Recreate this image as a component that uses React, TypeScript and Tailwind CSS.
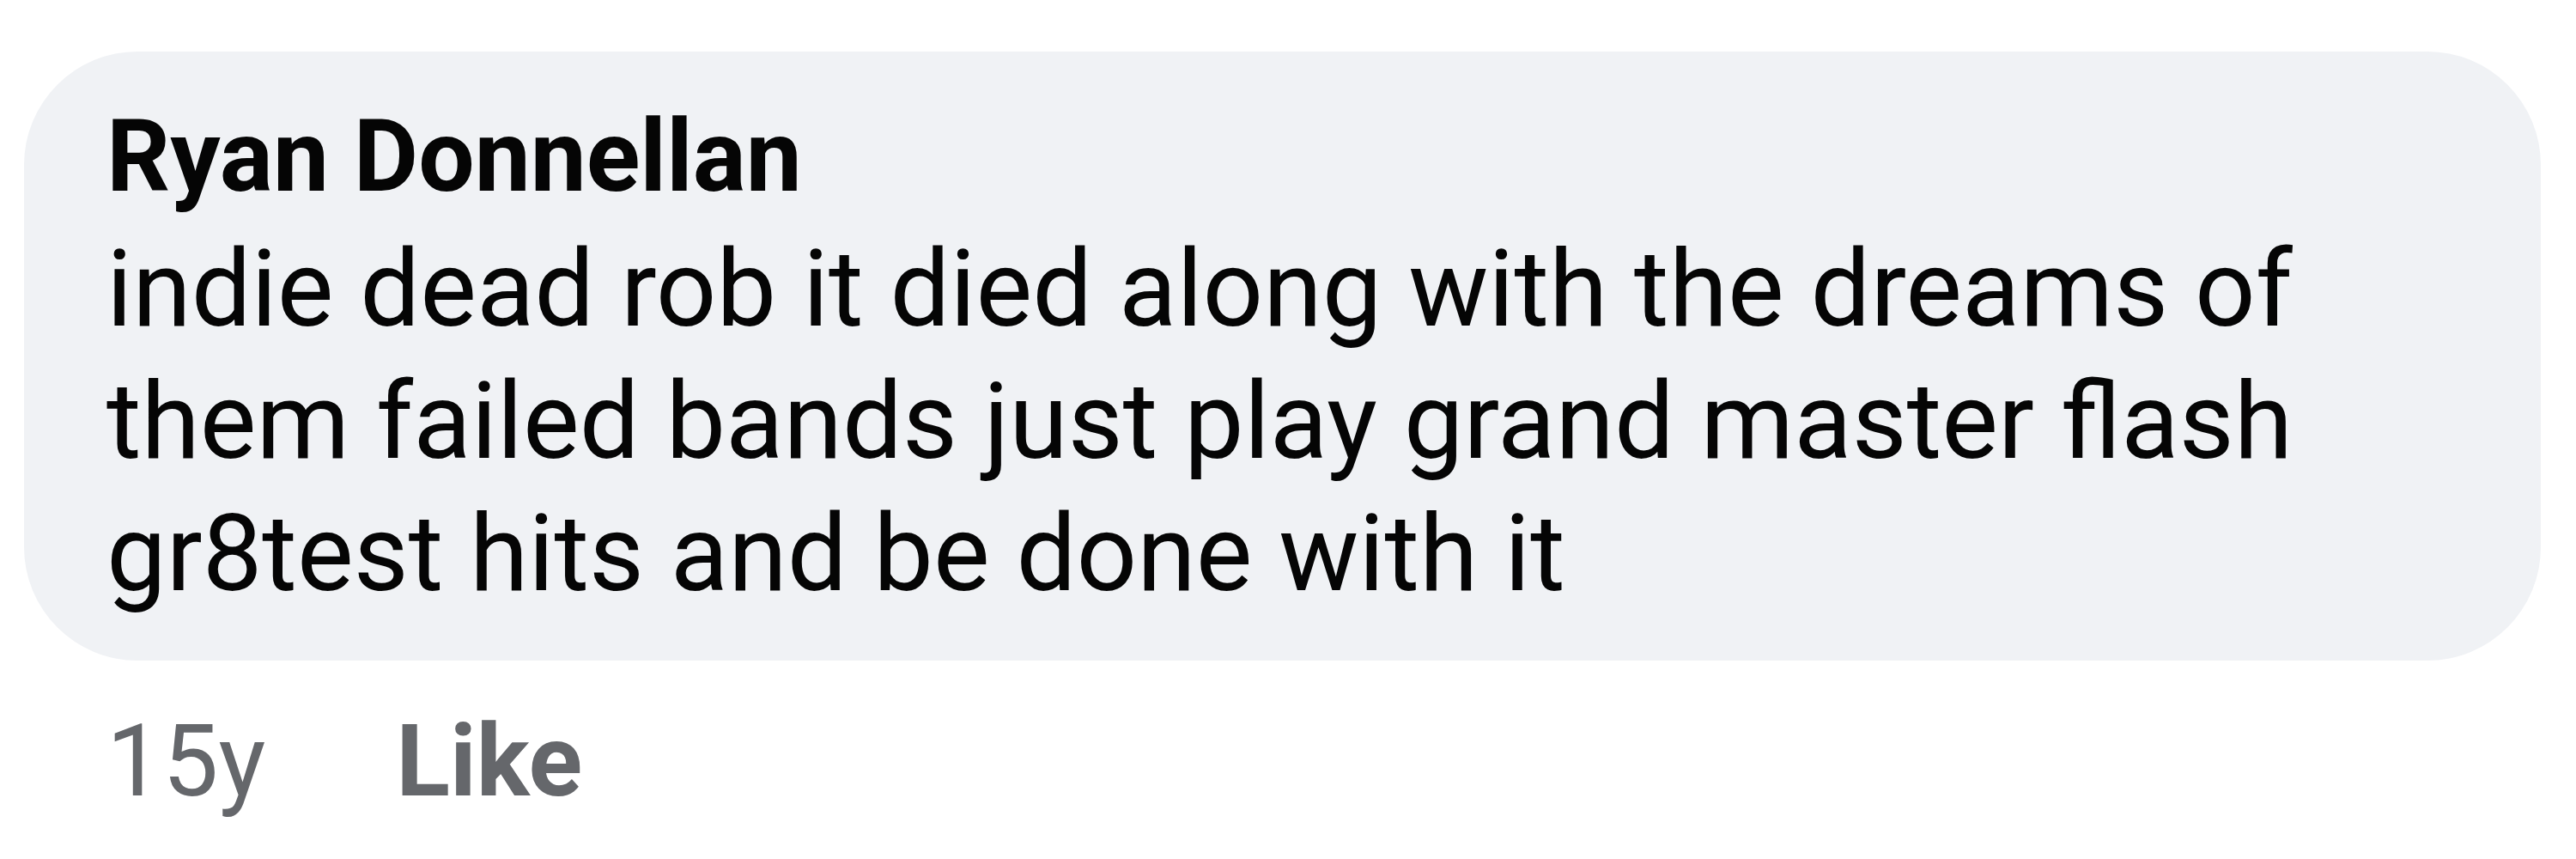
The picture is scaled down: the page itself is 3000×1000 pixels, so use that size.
const comment = {
  author: 'Ryan Donnellan',
  lines: [
    'indie dead rob it died along with the dreams of',
    'them failed bands just play grand master flash',
    'gr8test hits and be done with it',
  ],
  age: '15y',
};

const App = () => {
  return (
    <div className="w-[3000px] h-[1000px] bg-white pl-[28px] pr-[41px] pt-[60px] font-['Roboto',sans-serif]">
      <div className="rounded-[132px] bg-[#f0f2f5] pl-[96px] pt-[44px] pb-[47px]">
        <div className="text-[116px] leading-[156px] font-bold text-[#050505]">{comment.author}</div>
        <div className="text-[124px] leading-[154px] text-[#050505]">
          {comment.lines.map((line) => (
            <div key={line}>{line}</div>
          ))}
        </div>
      </div>
      <div className="flex items-baseline gap-[152px] pl-[96px] pt-[47px] text-[116px] leading-[140px] text-[#65676b]">
        <span>{comment.age}</span>
        <span className="font-bold">Like</span>
      </div>
    </div>
  );
};

export default App;
